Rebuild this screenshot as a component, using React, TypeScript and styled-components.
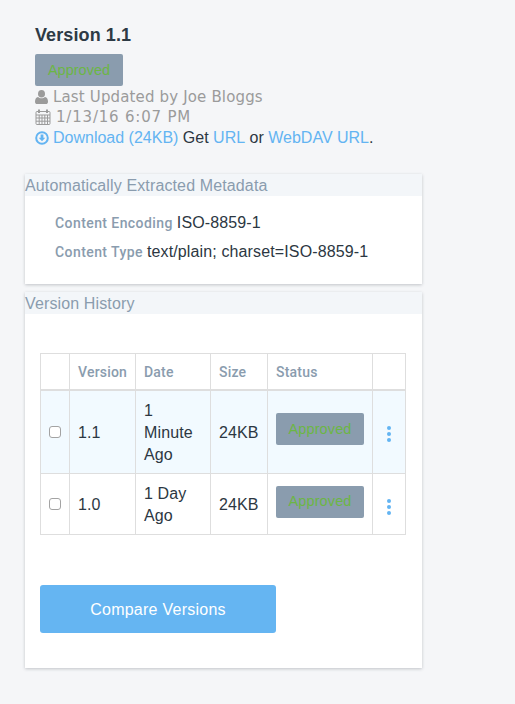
import React from 'react';
import styled, { createGlobalStyle } from 'styled-components';

const GlobalStyle = createGlobalStyle`
  html, body {
    margin: 0;
    padding: 0;
    background: #f5f6f8;
    font-family: "Liberation Sans", Arial, sans-serif;
    color: #2c3742;
  }
`;

const Page = styled.div`
  width: 515px;
  height: 704px;
  overflow: hidden;
  box-sizing: border-box;
  padding: 24px 93px 0 25px;
`;

const Summary = styled.section`
  padding-left: 10px;
  height: 150px;
`;

const Title = styled.h2`
  margin: 0 0 8px;
  font-size: 18px;
  line-height: 22px;
  font-weight: 700;
  letter-spacing: 0.1px;
  color: #2d3a45;
`;

const Badge = styled.span`
  display: flex;
  align-items: center;
  justify-content: center;
  box-sizing: border-box;
  width: 88px;
  height: 32px;
  padding-bottom: 1px;
  border-radius: 2px;
  background: #8a9cae;
  color: #6cb644;
  font-size: 14.5px;
`;

const Details = styled.div`
  padding-top: 1px;
`;

const MetaLine = styled.div<{ $spacing: number }>`
  display: flex;
  align-items: center;
  height: 20px;
  font-family: "DejaVu Sans", sans-serif;
  font-size: 15px;
  letter-spacing: ${(p) => p.$spacing}px;
  color: #9b9b9b;

  svg {
    flex: none;
    margin-right: 5px;
  }
`;

const LinkLine = styled.div`
  display: flex;
  align-items: center;
  height: 21px;
  font-size: 16px;
  white-space: pre;
  color: #2c3742;

  svg {
    flex: none;
    margin-right: 4px;
  }
`;

const TextLink = styled.a`
  color: #63b4f2;
  text-decoration: none;
`;

const Card = styled.section<{ $height: number }>`
  height: ${(p) => p.$height}px;
  margin-bottom: 8px;
  background: #fff;
  box-shadow: 0 1px 3px rgba(60, 70, 80, 0.28);
`;

const CardHeader = styled.h3`
  margin: 0;
  height: 22px;
  line-height: 24px;
  background: #f3f6f9;
  color: #8a9cae;
  font-size: 16px;
  font-weight: 400;
  letter-spacing: 0.13px;
`;

const Definitions = styled.dl`
  margin: 0;
  padding: 16px 0 0 30px;
`;

const DefRow = styled.div`
  height: 29px;
  line-height: 22px;
  font-size: 16px;
  letter-spacing: 0.13px;
  color: #2c3742;
`;

const DefLabel = styled.dt`
  display: inline;
  font-family: Roboto, sans-serif;
  font-size: 14px;
  font-weight: 500;
  letter-spacing: 0.42px;
  color: #8a9cae;
`;

const DefValue = styled.dd`
  display: inline;
  margin: 0 0 0 4px;
`;

const CardBody = styled.div`
  padding: 39px 16px 0 15px;
`;

const Table = styled.table`
  table-layout: fixed;
  border-collapse: collapse;
  width: 365px;
  font-size: 16px;
  letter-spacing: 0.13px;
`;

const HeadCell = styled.th`
  height: 36px;
  padding: 2px 8px 0;
  box-sizing: border-box;
  border: 1px solid #dedede;
  border-bottom-width: 2px;
  text-align: left;
  font-family: Roboto, sans-serif;
  font-size: 14px;
  font-weight: 500;
  letter-spacing: 0.2px;
  color: #8a9cae;
`;

const Row = styled.tr<{ $selected?: boolean }>`
  background: ${(p) => (p.$selected ? '#f2faff' : '#fff')};
`;

const Cell = styled.td`
  padding: 2px 8px 0;
  box-sizing: border-box;
  border: 1px solid #dedede;
  line-height: 22px;
  color: #2c3742;
`;

const StatusCell = styled(Cell)`
  padding: 0 8px 5px;
`;

const CheckCell = styled(Cell)`
  padding: 0;
  text-align: center;
`;

const Check = styled.input`
  appearance: none;
  display: block;
  box-sizing: border-box;
  width: 12px;
  height: 12px;
  margin: 0 auto;
  border: 1px solid #a3a3a3;
  border-radius: 3px;
  background: #fff;
`;

const DotsCell = styled(Cell)`
  padding: 0;
`;

const Dots = styled.span`
  display: flex;
  flex-direction: column;
  align-items: center;
  gap: 2px;
  margin-top: 5px;

  i {
    width: 4px;
    height: 4px;
    border-radius: 50%;
    background: #63b4f2;
  }
`;

const CompareButton = styled.button`
  display: block;
  width: 236px;
  height: 48px;
  margin-top: 50px;
  padding: 2px 0 0;
  border: 0;
  border-radius: 3px;
  background: #65b5f2;
  color: #fff;
  font-family: inherit;
  font-size: 16px;
  font-weight: 400;
  letter-spacing: 0.25px;
`;

const UserIcon = () => (
  <svg width="13" height="14" viewBox="0 0 13 14" fill="#9b9b9b">
    <ellipse cx="6.5" cy="3.8" rx="3.5" ry="3.8" />
    <path d="M3 7c1 .9 2.2 1.3 3.5 1.3S9 7.9 10 7c2 .3 3 2.2 3 4.7 0 1.4-.9 2.3-2.2 2.3H2.2C.9 14 0 13.1 0 11.7 0 9.2 1 7.3 3 7z" />
  </svg>
);

const CalendarIcon = () => (
  <svg width="16" height="16" viewBox="0 0 15 16" fill="none" stroke="#9b9b9b" strokeWidth="1">
    <rect x="0.5" y="2.5" width="14" height="13" rx="1" />
    <path d="M0.5 6h14M0.5 9h14M0.5 12.2h14M3.7 6v9.5M6.5 6v9.5M9.3 6v9.5M12 6v9.5" />
    <path d="M3.5 0.5v3.5M11.5 0.5v3.5" strokeWidth="2" />
  </svg>
);

const DownloadIcon = () => (
  <svg width="14" height="14" viewBox="0 0 14 14">
    <circle cx="7" cy="7" r="5.8" fill="none" stroke="#63b4f2" strokeWidth="2" />
    <path d="M5.6 3.6h2.8v3.1h1.9L7 10.3 3.7 6.7h1.9z" fill="#63b4f2" />
  </svg>
);

const versions = [
  { id: '1.1', date: '1 Minute Ago', height: 84, selected: true },
  { id: '1.0', date: '1 Day Ago', height: 61, selected: false },
];

export default function App() {
  return (
    <Page>
      <GlobalStyle />
      <Summary>
        <Title>Version 1.1</Title>
        <Badge>Approved</Badge>
        <Details>
          <MetaLine $spacing={0.15}>
            <UserIcon />
            Last Updated by Joe Bloggs
          </MetaLine>
          <MetaLine $spacing={0.8}>
            <CalendarIcon />
            1/13/16 6:07 PM
          </MetaLine>
          <LinkLine>
            <DownloadIcon />
            <TextLink href="#">Download (24KB)</TextLink> Get <TextLink href="#">URL</TextLink> or{' '}
            <TextLink href="#">WebDAV URL</TextLink>.
          </LinkLine>
        </Details>
      </Summary>

      <Card $height={110}>
        <CardHeader>Automatically Extracted Metadata</CardHeader>
        <Definitions>
          <DefRow>
            <DefLabel>Content Encoding</DefLabel>
            <DefValue>ISO-8859-1</DefValue>
          </DefRow>
          <DefRow>
            <DefLabel>Content Type</DefLabel>
            <DefValue>text/plain; charset=ISO-8859-1</DefValue>
          </DefRow>
        </Definitions>
      </Card>

      <Card $height={376}>
        <CardHeader>Version History</CardHeader>
        <CardBody>
          <Table>
            <colgroup>
              <col width="29" />
              <col width="66" />
              <col width="75" />
              <col width="57" />
              <col width="105" />
              <col width="33" />
            </colgroup>
            <thead>
              <tr>
                <HeadCell />
                <HeadCell>Version</HeadCell>
                <HeadCell>Date</HeadCell>
                <HeadCell>Size</HeadCell>
                <HeadCell>Status</HeadCell>
                <HeadCell />
              </tr>
            </thead>
            <tbody>
              {versions.map((v) => (
                <Row key={v.id} $selected={v.selected} style={{ height: v.height }}>
                  <CheckCell>
                    <Check type="checkbox" />
                  </CheckCell>
                  <Cell>{v.id}</Cell>
                  <Cell>{v.date}</Cell>
                  <Cell>24KB</Cell>
                  <StatusCell>
                    <Badge>Approved</Badge>
                  </StatusCell>
                  <DotsCell>
                    <Dots>
                      <i />
                      <i />
                      <i />
                    </Dots>
                  </DotsCell>
                </Row>
              ))}
            </tbody>
          </Table>
          <CompareButton>Compare Versions</CompareButton>
        </CardBody>
      </Card>
    </Page>
  );
}
